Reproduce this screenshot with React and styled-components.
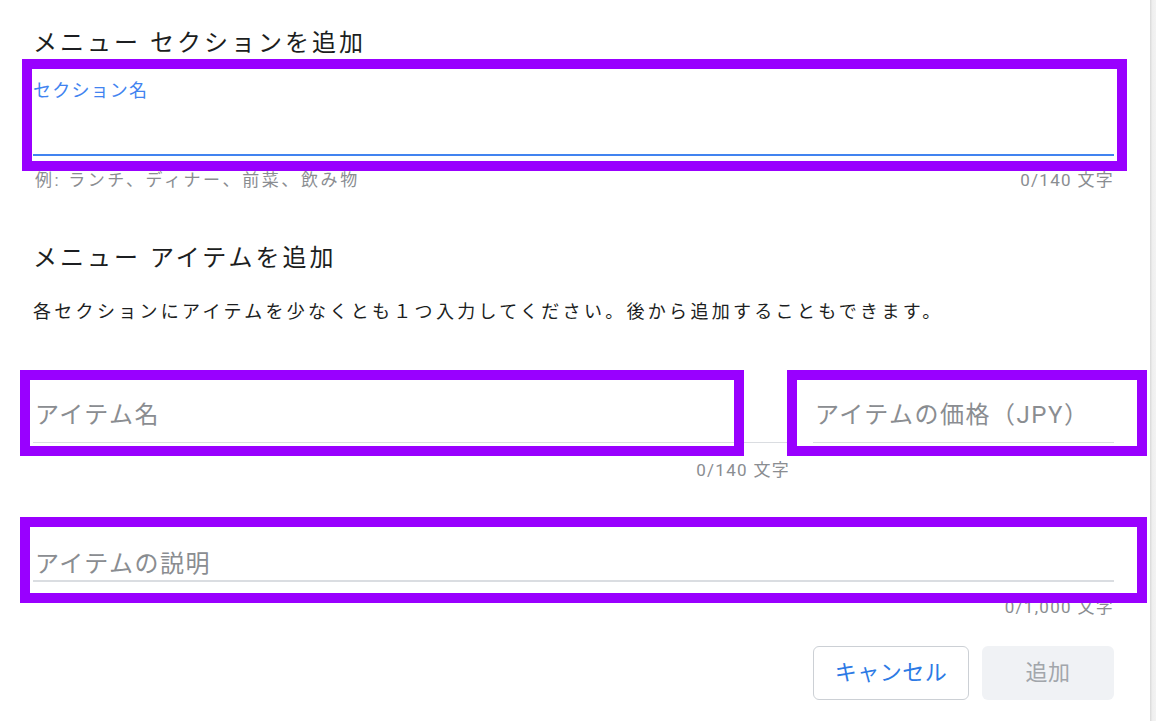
import React from "react";
import styled, { createGlobalStyle } from "styled-components";

const GlobalStyle = createGlobalStyle`
  html, body { margin: 0; padding: 0; background: #ffffff; }
  body { font-family: Roboto, "Noto Sans CJK JP", sans-serif; }
  * { box-sizing: border-box; }
`;

const FONT = `Roboto, "Noto Sans CJK JP", sans-serif`;

const Screen = styled.div`
  width: 1156px;
  height: 721px;
  display: flex;
  overflow: hidden;
  background: #ffffff;
`;

const Main = styled.div`
  position: relative;
  flex: 1;
  display: flex;
  flex-direction: column;
  padding: 27px 36px 0 33px;
`;

const ScrollEdge = styled.div`
  width: 6px;
  background: linear-gradient(to right, #d9d9d9, #efefef 40%, #f3f3f3);
`;

const Heading = styled.h2`
  margin: ${(p) => p.$mt || 0}px 0 0 0;
  font-family: ${FONT};
  font-weight: 400;
  font-size: 24px;
  line-height: 32px;
  letter-spacing: 3px;
  color: #1c1e21;
`;

const Paragraph = styled.p`
  margin: ${(p) => p.$mt || 0}px 0 0 0;
  font-family: ${FONT};
  font-size: 18px;
  line-height: 28px;
  letter-spacing: 3.3px;
  color: #1c1e21;
`;

const FieldBlock = styled.div`
  display: flex;
  flex-direction: column;
  width: ${(p) => (p.$w ? `${p.$w}px` : "100%")};
  margin-top: ${(p) => p.$mt || 0}px;
`;

const FloatLabel = styled.label`
  margin-top: 20px;
  font-family: ${FONT};
  font-size: 18px;
  line-height: 24px;
  letter-spacing: 1.2px;
  color: #4183f0;
`;

const TextInput = styled.input`
  display: block;
  width: 100%;
  height: ${(p) => p.$h}px;
  margin: 0;
  padding: 0 0 ${(p) => p.$pb || 0}px 2px;
  border: none;
  border-bottom: ${(p) => p.$line}px solid ${(p) => p.$lineColor};
  outline: none;
  background: transparent;
  font-family: ${FONT};
  font-size: 24px;
  line-height: 32px;
  letter-spacing: 1.5px;
  color: #1c1e21;
  &::placeholder {
    color: #8a8d91;
    opacity: 1;
  }
`;

const HelperRow = styled.div`
  display: flex;
  justify-content: ${(p) => (p.$end ? "flex-end" : "space-between")};
  margin-top: ${(p) => p.$mt || 0}px;
  font-family: ${FONT};
  font-size: 17px;
  line-height: 22px;
  color: #8a8d91;
`;

const Hint = styled.span`
  padding-left: 2px;
  letter-spacing: 2.6px;
`;

const Counter = styled.span`
  letter-spacing: 1.3px;
`;

const FieldRow = styled.div`
  display: flex;
  align-items: flex-start;
  gap: 23px;
  margin-top: ${(p) => p.$mt || 0}px;
`;

const Actions = styled.div`
  display: flex;
  justify-content: flex-end;
  gap: 13px;
  margin-top: ${(p) => p.$mt || 0}px;
`;

const Button = styled.button`
  width: ${(p) => p.$w}px;
  height: 54px;
  border-radius: 6px;
  font-family: ${FONT};
  font-size: 22px;
  line-height: 28px;
  letter-spacing: 0.5px;
  cursor: pointer;
  border: ${(p) => (p.$variant === "outline" ? "1.5px solid #ccd0d5" : "none")};
  background: ${(p) => (p.$variant === "outline" ? "#ffffff" : "#f0f2f5")};
  color: ${(p) => (p.$variant === "outline" ? "#2d7ae5" : "#a2a6ab")};
`;

const Highlight = styled.div`
  position: absolute;
  left: ${(p) => p.$x}px;
  top: ${(p) => p.$y}px;
  width: ${(p) => p.$w}px;
  height: ${(p) => p.$h}px;
  border: 10px solid #9900ff;
  pointer-events: none;
`;

const highlights = [
  { x: 22, y: 59, w: 1105, h: 112 },
  { x: 20, y: 370, w: 724, h: 86 },
  { x: 787, y: 370, w: 360, h: 86 },
  { x: 20, y: 517, w: 1127, h: 86 },
];

export default function App() {
  return (
    <>
      <GlobalStyle />
      <Screen>
        <Main>
          <Heading>メニュー セクションを追加</Heading>

          <FieldBlock>
            <FloatLabel>セクション名</FloatLabel>
            <TextInput $h={53} $line={2} $lineColor="#4183f0" />
          </FieldBlock>
          <HelperRow $mt={13}>
            <Hint>例: ランチ、ディナー、前菜、飲み物</Hint>
            <Counter>0/140 文字</Counter>
          </HelperRow>

          <Heading $mt={51}>メニュー アイテムを追加</Heading>
          <Paragraph $mt={24}>
            各セクションにアイテムを少なくとも１つ入力してください。後から追加することもできます。
          </Paragraph>

          <FieldRow $mt={73}>
            <FieldBlock $w={757}>
              <TextInput
                $h={44}
                $pb={11}
                $line={1}
                $lineColor="#dadde1"
                placeholder="アイテム名"
              />
              <HelperRow $end $mt={16}>
                <Counter>0/140 文字</Counter>
              </HelperRow>
            </FieldBlock>
            <FieldBlock $w={301}>
              <TextInput
                $h={44}
                $pb={11}
                $line={1}
                $lineColor="#dadde1"
                placeholder="アイテムの価格（JPY）"
              />
            </FieldBlock>
          </FieldRow>

          <FieldBlock $mt={67}>
            <TextInput
              $h={34}
              $line={2}
              $lineColor="#dadde1"
              placeholder="アイテムの説明"
            />
          </FieldBlock>
          <HelperRow $end $mt={14}>
            <Counter>0/1,000 文字</Counter>
          </HelperRow>

          <Actions $mt={28}>
            <Button $variant="outline" $w={156}>キャンセル</Button>
            <Button $variant="muted" $w={132}>追加</Button>
          </Actions>

          {highlights.map((b, i) => (
            <Highlight key={i} $x={b.x} $y={b.y} $w={b.w} $h={b.h} />
          ))}
        </Main>
        <ScrollEdge />
      </Screen>
    </>
  );
}
